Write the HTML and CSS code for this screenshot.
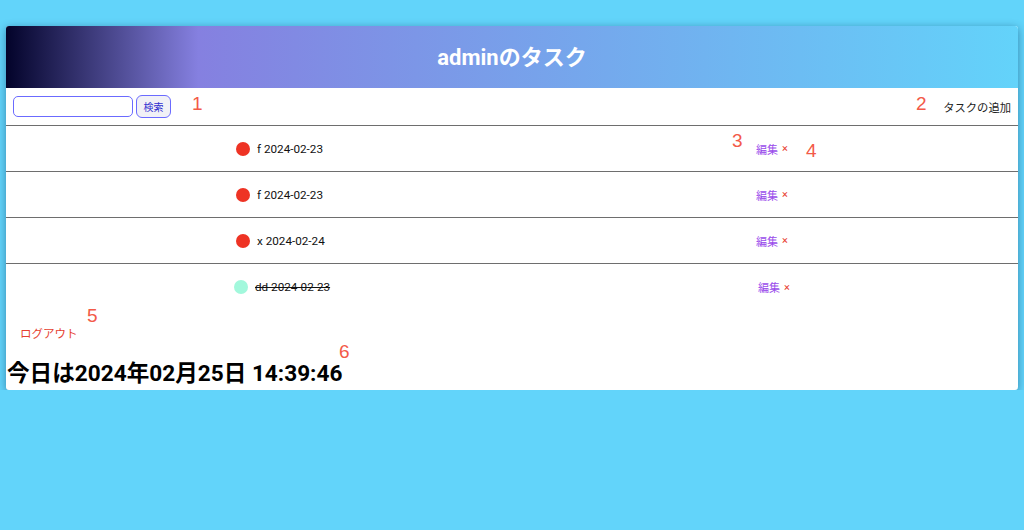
FILE: index.html
```html
<!DOCTYPE html>
<html lang="ja">
<head>
<meta charset="utf-8">
<title>adminのタスク</title>
<link rel="stylesheet" href="styles.css">
</head>
<body>
<div class="card">
  <header class="head"><h1 class="title">adminのタスク</h1></header>
  <div class="toolbar">
    <form class="search">
      <input class="search-input" type="text">
      <button class="search-btn" type="button">検索</button>
    </form>
    <a class="add-link">タスクの追加</a>
  </div>
  <ul class="tasks">
    <li class="task">
      <div class="task-main"><span class="dot dot-todo"></span><span class="task-text">f 2024-02-23</span></div>
      <div class="task-actions"><a class="edit">編集</a><a class="del">×</a></div>
    </li>
    <li class="task">
      <div class="task-main"><span class="dot dot-todo"></span><span class="task-text">f 2024-02-23</span></div>
      <div class="task-actions"><a class="edit">編集</a><a class="del">×</a></div>
    </li>
    <li class="task">
      <div class="task-main"><span class="dot dot-todo"></span><span class="task-text">x 2024-02-24</span></div>
      <div class="task-actions"><a class="edit">編集</a><a class="del">×</a></div>
    </li>
    <li class="task task-last">
      <div class="task-main task-main-done"><span class="dot dot-done"></span><span class="task-text done">dd 2024-02-23</span></div>
      <div class="task-actions task-actions-done"><a class="edit">編集</a><a class="del">×</a></div>
    </li>
  </ul>
  <div class="footer">
    <a class="logout">ログアウト</a>
    <p class="clock">今日は2024年02月25日 14:39:46</p>
  </div>
  <span class="note n1">1</span>
  <span class="note n2">2</span>
  <span class="note n3">3</span>
  <span class="note n4">4</span>
  <span class="note n5">5</span>
  <span class="note n6">6</span>
</div>
</body>
</html>
```

FILE: styles.css
```css
html, body {
  margin: 0;
  padding: 0;
}
body {
  background: #62d4fa;
  padding: 26px 6px 0 6px;
  font-family: Roboto, "Noto Sans CJK JP", sans-serif;
  color: #222;
}
.card {
  position: relative;
  background: #fff;
  box-shadow: 0 2px 8px rgba(0, 40, 80, 0.45);
  height: 364px;
  border-radius: 3px;
  overflow: hidden;
}
.head {
  height: 62px;
  background: linear-gradient(90deg, #03032a 0%, #8580e0 19%, #63d3fa 100%);
  display: flex;
  align-items: center;
  justify-content: center;
}
.title {
  margin: 2px 0 0 0;
  color: #fff;
  font-size: 22px;
  font-weight: 700;
  line-height: 1;
}
.toolbar {
  height: 37px;
  border-bottom: 1px solid #6e6e6e;
  display: flex;
  align-items: center;
  justify-content: space-between;
  padding: 0 7px 0 7px;
}
.search {
  display: flex;
  align-items: center;
  gap: 3px;
  margin: 0;
}
.search-input {
  width: 120px;
  height: 21px;
  box-sizing: border-box;
  border: 1px solid #6b6bff;
  border-radius: 5px;
  padding: 0;
  margin: 0;
  outline: none;
}
.search-btn {
  width: 35px;
  height: 23px;
  box-sizing: border-box;
  border: 1px solid #6b6bff;
  border-radius: 6px;
  background: #f1f1f6;
  color: #3030d0;
  font-family: "Noto Sans CJK JP", sans-serif;
  font-size: 10px;
  padding: 0;
  margin: 0;
}
.add-link {
  font-size: 11.3px;
  font-family: "Noto Sans CJK JP", sans-serif;
  color: #222;
}
.tasks {
  list-style: none;
  margin: 0;
  padding: 0;
}
.task {
  height: 45px;
  border-bottom: 1px solid #6e6e6e;
  display: flex;
  align-items: center;
  padding-left: 230px;
}
.task-last {
  border-bottom: none;
  height: 46px;
}
.task-main {
  width: 520px;
  display: flex;
  align-items: center;
  gap: 7px;
}
.task-main-done {
  margin-left: -2px;
  width: 522px;
}
.dot {
  width: 14px;
  height: 14px;
  border-radius: 50%;
  flex: none;
}
.dot-todo { background: #ee3324; }
.dot-done { background: #a2f8dc; }
.task-text {
  font-size: 11.7px;
  color: #111;
}
.done {
  text-decoration: line-through;
}
.task-actions {
  display: flex;
  align-items: center;
  gap: 4px;
  font-size: 11px;
}
.task-actions-done {
  margin-left: 2px;
}
.edit {
  color: #9a4ceb;
  font-family: "Noto Sans CJK JP", sans-serif;
}
.del {
  color: #e8402f;
  font-size: 11px;
}
.footer {
  padding: 16px 0 0 1px;
}
.logout {
  display: block;
  margin-left: 13px;
  font-size: 11.5px;
  color: #e5402f;
  font-family: "Noto Sans CJK JP", sans-serif;
  line-height: 14px;
}
.clock {
  margin: 20px 0 0 0;
  font-size: 22.6px;
  font-weight: 700;
  line-height: 28px;
  color: #000;
}
.note {
  position: absolute;
  font-family: "Liberation Sans", sans-serif;
  font-size: 19px;
  color: #f35a48;
  line-height: 1;
}
.n1 { left: 186px; top: 68px; }
.n2 { left: 910px; top: 68px; }
.n3 { left: 726px; top: 105px; }
.n4 { left: 800px; top: 115px; }
.n5 { left: 81px; top: 280px; }
.n6 { left: 333px; top: 316px; }
```
